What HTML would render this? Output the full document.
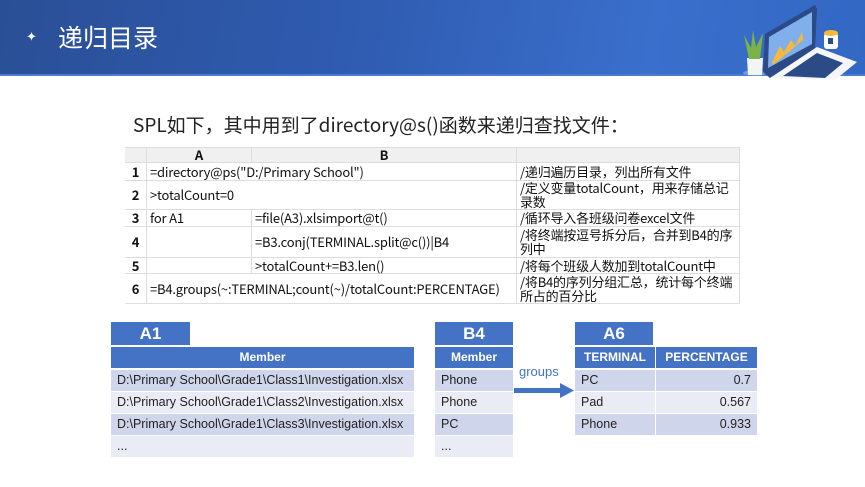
<!DOCTYPE html>
<html><head><meta charset="utf-8"><style>
*{margin:0;padding:0;box-sizing:border-box}
body{width:865px;height:487px;background:#fff;position:relative;overflow:hidden;font-family:"Liberation Sans","Noto Sans CJK SC",sans-serif}
.hdr{position:absolute;left:0;top:0;width:865px;height:75px;background:linear-gradient(100deg,#2a4f96 0%,#2f5bb0 40%,#3a6fcc 75%,#3367c4 100%)}
.hdr .line{position:absolute;left:0;top:74px;width:865px;height:2px;background:#4a7bd0}
.title{position:absolute;left:58px;top:22px;color:#fff;font-size:25px;font-family:"Noto Sans CJK SC",sans-serif;line-height:30px}
.star{position:absolute;left:26px;top:29px;color:#fff;font-size:13px}
.a{position:absolute}
.intro{position:absolute;left:133px;top:111px;font-size:19px;color:#222;font-family:"Noto Sans CJK SC",sans-serif}
.g{position:absolute;font-size:13px;color:#111;font-family:"Noto Sans CJK SC",sans-serif;line-height:14px;display:flex;align-items:center;padding-left:3px;border-right:1px solid #ddd;border-bottom:1px solid #ddd;letter-spacing:-0.2px}
.rh{background:#f0f0f0;justify-content:center;font-weight:bold;padding:0}
.tab{position:absolute;background:#4472c4;color:#fff;font-weight:bold;font-size:17px;text-align:center;line-height:23px}
.th{position:absolute;background:#4472c4;color:#fff;font-weight:bold;font-size:12px;text-align:center;line-height:21px}
.td{position:absolute;background:#cfd5ea;color:#222;font-size:12.5px;line-height:21px;padding-left:6px}
.td.l{background:#e9ebf5}
.r{text-align:right;padding-right:6px}
</style></head><body>
<div class="hdr"><div class="line"></div></div>
<div class="star">✦</div>
<div class="title">递归目录</div>
<svg class="a" style="left:735px;top:0px" width="130" height="80" viewBox="0 0 130 80">
<ellipse cx="20" cy="73" rx="12" ry="3" fill="#6f9ae0"/>
<path d="M12 58 L28 58 L27 75 L13 75Z" fill="#f2f4f8"/>
<path d="M14 59 L9 35 L16 48 L18 30 L21 47 L28 33 L25 59Z" fill="#7cb342"/>
<path d="M28 72 L30 34 L80 5 L82 9 L80 48 L35 78Z" fill="#2b4a86"/>
<path d="M33 68 L34 37 L77 12 L77 44Z" fill="#7fb0ec"/>
<path d="M37 62 L45 46 L49 52 L56 40 L60 46 L67 32 L68 40 L38 65Z" fill="#f6b93b"/>
<path d="M35 78 L82 47 L122 62 L100 80 Z" fill="#f4f6fa"/>
<path d="M48 76 L82 53 L108 63 L90 78Z" fill="#2b4a86"/>
<rect x="89" y="33" width="14" height="16" rx="3" fill="#fff"/>
<ellipse cx="96" cy="33" rx="7" ry="3" fill="#f6b93b"/>
<rect x="93" y="38" width="5" height="6" fill="#2b4a86"/>
</svg>
<div class="intro">SPL如下，其中用到了directory@s()函数来递归查找文件：</div>
<div class="a" style="left:125px;top:147px;width:615px;height:157px;border-top:1px solid #ddd;border-left:1px solid #ddd"></div>
<div class="g rh" style="left:125px;top:148px;width:22px;height:15px"></div>
<div class="g rh" style="left:147px;top:148px;width:105px;height:15px">A</div>
<div class="g rh" style="left:252px;top:148px;width:265px;height:15px">B</div>
<div class="g rh" style="left:517px;top:148px;width:223px;height:15px"></div>
<div class="g rh" style="left:125px;top:163px;width:22px;height:18px;background:#fff">1</div>
<div class="g rh" style="left:125px;top:181px;width:22px;height:29px;background:#fff">2</div>
<div class="g rh" style="left:125px;top:210px;width:22px;height:17px;background:#fff">3</div>
<div class="g rh" style="left:125px;top:227px;width:22px;height:31px;background:#fff">4</div>
<div class="g rh" style="left:125px;top:258px;width:22px;height:16px;background:#fff">5</div>
<div class="g rh" style="left:125px;top:274px;width:22px;height:30px;background:#fff">6</div>
<div class="g" style="left:147px;top:163px;width:370px;height:18px">=directory@ps("D:/Primary School")</div>
<div class="g" style="left:517px;top:163px;width:223px;height:18px">/递归遍历目录，列出所有文件</div>
<div class="g" style="left:147px;top:181px;width:370px;height:29px">&gt;totalCount=0</div>
<div class="g" style="left:517px;top:181px;width:223px;height:29px">/定义变量totalCount，用来存储总记录数</div>
<div class="g" style="left:147px;top:210px;width:105px;height:17px">for A1</div>
<div class="g" style="left:252px;top:210px;width:265px;height:17px">=file(A3).xlsimport@t()</div>
<div class="g" style="left:517px;top:210px;width:223px;height:17px">/循环导入各班级问卷excel文件</div>
<div class="g" style="left:147px;top:227px;width:105px;height:31px"></div>
<div class="g" style="left:252px;top:227px;width:265px;height:31px">=B3.conj(TERMINAL.split@c())|B4</div>
<div class="g" style="left:517px;top:227px;width:223px;height:31px">/将终端按逗号拆分后，合并到B4的序列中</div>
<div class="g" style="left:147px;top:258px;width:105px;height:16px"></div>
<div class="g" style="left:252px;top:258px;width:265px;height:16px">&gt;totalCount+=B3.len()</div>
<div class="g" style="left:517px;top:258px;width:223px;height:16px">/将每个班级人数加到totalCount中</div>
<div class="g" style="left:147px;top:274px;width:370px;height:30px">=B4.groups(~:TERMINAL;count(~)/totalCount:PERCENTAGE)</div>
<div class="g" style="left:517px;top:274px;width:223px;height:30px">/将B4的序列分组汇总，统计每个终端所占的百分比</div>
<div class="tab" style="left:111px;top:322px;width:79px;height:23px">A1</div>
<div class="th" style="left:111px;top:347px;width:303px;height:21px">Member</div>
<div class="td" style="left:111px;top:370px;width:303px;height:21px">D:\Primary School\Grade1\Class1\Investigation.xlsx</div>
<div class="td l" style="left:111px;top:392px;width:303px;height:21px">D:\Primary School\Grade1\Class2\Investigation.xlsx</div>
<div class="td" style="left:111px;top:414px;width:303px;height:21px">D:\Primary School\Grade1\Class3\Investigation.xlsx</div>
<div class="td l" style="left:111px;top:436px;width:303px;height:21px">...</div>
<div class="tab" style="left:435px;top:322px;width:78px;height:23px">B4</div>
<div class="th" style="left:435px;top:347px;width:78px;height:21px">Member</div>
<div class="td" style="left:435px;top:370px;width:78px;height:21px">Phone</div>
<div class="td l" style="left:435px;top:392px;width:78px;height:21px">Phone</div>
<div class="td" style="left:435px;top:414px;width:78px;height:21px">PC</div>
<div class="td l" style="left:435px;top:436px;width:78px;height:21px">...</div>
<div class="a" style="left:519px;top:364px;font-size:13px;color:#4472c4">groups</div>
<svg class="a" style="left:514px;top:383px" width="62" height="16"><rect x="0" y="5" width="48" height="5" fill="#4472c4"/><path d="M46 0 L60 7.5 L46 15Z" fill="#4472c4"/></svg>
<div class="tab" style="left:575px;top:322px;width:78px;height:23px">A6</div>
<div class="th" style="left:575px;top:347px;width:80px;height:21px">TERMINAL</div>
<div class="th" style="left:656px;top:347px;width:101px;height:21px">PERCENTAGE</div>
<div class="td" style="left:575px;top:370px;width:80px;height:21px">PC</div>
<div class="td r" style="left:656px;top:370px;width:101px;height:21px">0.7</div>
<div class="td l" style="left:575px;top:392px;width:80px;height:21px">Pad</div>
<div class="td l r" style="left:656px;top:392px;width:101px;height:21px">0.567</div>
<div class="td" style="left:575px;top:414px;width:80px;height:21px">Phone</div>
<div class="td r" style="left:656px;top:414px;width:101px;height:21px">0.933</div>
</body></html>
